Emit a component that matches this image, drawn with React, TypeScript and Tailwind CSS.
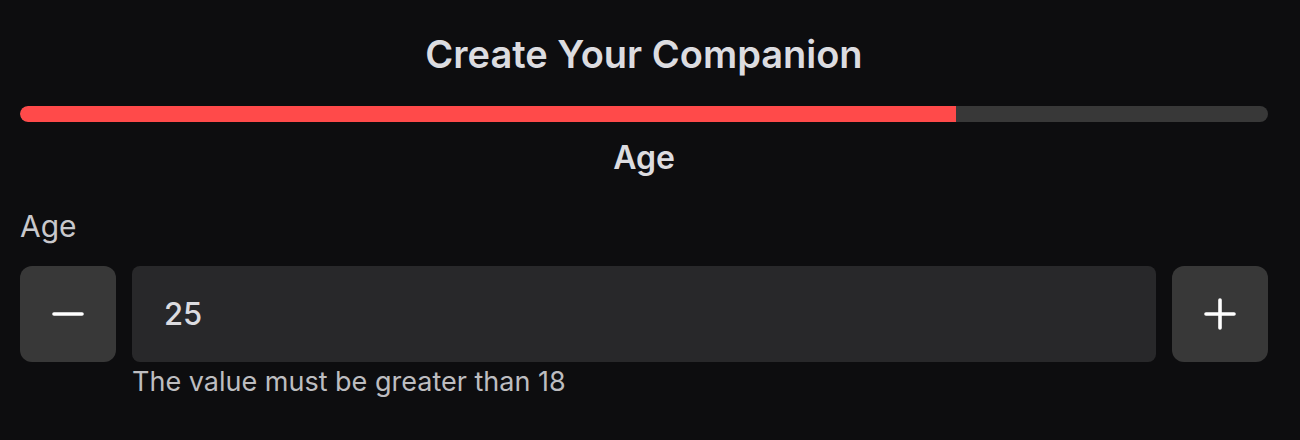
import { useState } from 'react';

const font = { fontFamily: 'Inter, "Noto Sans", sans-serif' };

const StepButton = ({ kind, onClick }: { kind: 'minus' | 'plus'; onClick: () => void }) => (
  <button
    onClick={onClick}
    className="flex h-24 w-24 shrink-0 items-center justify-center rounded-xl bg-[#383838]"
  >
    <svg width="32" height="32" viewBox="0 0 32 32" fill="none" stroke="#ffffff" strokeWidth="3.6" strokeLinecap="round">
      <line x1="2" y1="16" x2="30" y2="16" />
      {kind === 'plus' && <line x1="16" y1="2" x2="16" y2="30" />}
    </svg>
  </button>
);

export default function App() {
  const [age, setAge] = useState(25);
  const progress = 75;

  return (
    <div className="min-h-[440px] w-full bg-[#0d0d0f] pl-5 pr-8 pt-[30px]" style={font}>
      <h1 className="text-center text-[38px] font-semibold leading-[48px] text-[#dcdce0]">
        Create Your Companion
      </h1>
      <div className="mt-[28px] h-4 w-full overflow-hidden rounded-full bg-[#383838]">
        <div className="h-full rounded-l-full bg-[#ff4a4a]" style={{ width: `${progress}%` }} />
      </div>
      <h2 className="mt-[16px] text-center text-[32px] font-semibold leading-[40px] text-[#dcdce0]">Age</h2>
      <label className="mt-[30px] block text-[30px] leading-[36px] text-[#c8c8cc]">Age</label>
      <div className="mt-[22px] flex gap-4">
        <StepButton kind="minus" onClick={() => setAge(age - 1)} />
        <div className="flex-1">
          <div className="flex h-24 items-center rounded-lg bg-[#28282a] px-8">
            <span className="text-[31px] font-medium text-[#dcdce0]">{age}</span>
          </div>
          <p className="mt-[4px] text-[27px] leading-[32px] text-[#bdbdc0]">The value must be greater than 18</p>
        </div>
        <StepButton kind="plus" onClick={() => setAge(age + 1)} />
      </div>
    </div>
  );
}
